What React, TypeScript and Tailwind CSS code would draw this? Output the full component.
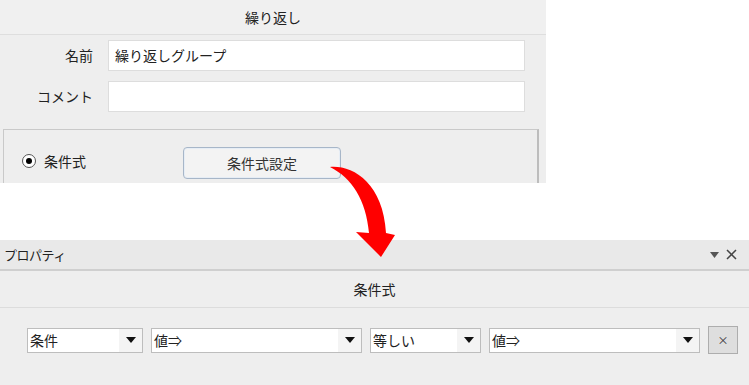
import React from "react";

const jp = { fontFamily: '"Noto Sans CJK JP", "Noto Sans", sans-serif' };

function Select({ label, width }: { label: string; width: string }) {
  return (
    <div className={`${width} h-[25px] flex border border-[#bdbdbd] bg-white`}>
      <div className="flex-1 flex items-center pl-[2px] text-[14px] text-[#222]">{label}</div>
      <div className="w-[23px] bg-[#f4f4f4] flex items-center justify-center">
        <svg width="10" height="6" viewBox="0 0 10 6">
          <path d="M0 0 H10 L5 6 Z" fill="#111" />
        </svg>
      </div>
    </div>
  );
}

export default function App() {
  return (
    <div className="relative w-[749px] h-[385px] bg-white overflow-hidden text-[#222]" style={jp}>
      {/* 上: 繰り返し設定 */}
      <div className="w-[546px] h-[183px] bg-[#eeeeee] flex flex-col overflow-hidden">
        <div className="h-[35px] bg-[#f0f0f0] border-b border-[#dedede] flex items-center justify-center text-[14px]">
          繰り返し
        </div>
        <div className="flex items-center h-[31px] mt-[5px]">
          <div className="w-[93px] text-right text-[14px]">名前</div>
          <div className="ml-[15px] w-[417px] h-full bg-white border border-[#dddddd] flex items-center pl-[6px] text-[14px]">
            繰り返しグループ
          </div>
        </div>
        <div className="flex items-center h-[31px] mt-[10px]">
          <div className="w-[93px] text-right text-[14px]">コメント</div>
          <div className="ml-[15px] w-[417px] h-full bg-white border border-[#dddddd]" />
        </div>
        <div className="ml-[3px] mt-[17px] w-[536px] flex-1 border border-b-0 border-[#c9c9c9] border-r-[#bdbdbd] border-r-2 flex items-start pt-[17px]">
          <div className="ml-[18px] mt-[7px] w-[14px] h-[14px] rounded-full border border-[#555] bg-white flex items-center justify-center">
            <div className="w-[6px] h-[6px] rounded-full bg-black" />
          </div>
          <div className="ml-[8px] mt-[4px] text-[14px]">条件式</div>
          <div className="ml-[97px] w-[158px] h-[32px] rounded-[4px] border border-[#a7b6c8] bg-[#f3f3f3] shadow-[inset_0_0_0_1px_#e6edf5] flex items-center justify-center text-[14px] text-[#333]">
            条件式設定
          </div>
        </div>
      </div>

      {/* 下: プロパティ */}
      <div className="mt-[57px] h-[145px] bg-[#eeeeee] flex flex-col">
        <div className="h-[31px] bg-[#e9e9e9] border-b-2 border-[#cfcfcf] flex items-center pl-[4px] pr-[12px] text-[13px]">
          <span className="tracking-[-0.5px]">プロパティ</span>
          <div className="ml-auto flex items-center gap-[7px]">
            <svg width="9" height="6" viewBox="0 0 9 6">
              <path d="M0 0 H9 L4.5 6 Z" fill="#555" />
            </svg>
            <svg width="11" height="11" viewBox="0 0 11 11">
              <path d="M1 1 L10 10 M10 1 L1 10" stroke="#444" strokeWidth="1.5" />
            </svg>
          </div>
        </div>
        <div className="h-[37px] border-b border-[#dcdcdc] flex items-center justify-center text-[14px]">
          条件式
        </div>
        <div className="flex items-center gap-[8px] pl-[27px] mt-[18px]">
          <Select label="条件" width="w-[116px]" />
          <Select label="値⇒" width="w-[211px]" />
          <Select label="等しい" width="w-[111px]" />
          <Select label="値⇒" width="w-[211px]" />
          <div className="w-[30px] h-[28px] bg-[#dedede] border border-[#adadad] flex items-center justify-center text-[11px] text-[#333]">
            ×
          </div>
        </div>
      </div>

      {/* 赤い矢印 */}
      <svg className="absolute left-0 top-0 pointer-events-none" width="749" height="385" viewBox="0 0 749 385">
        <path
          d="M330,167 C352,165 383,182 386,233 L395,235 L381,257 L356,232 L369,233 C366,200 352,178 330,167 Z"
          fill="#ff0000"
        />
      </svg>
    </div>
  );
}
